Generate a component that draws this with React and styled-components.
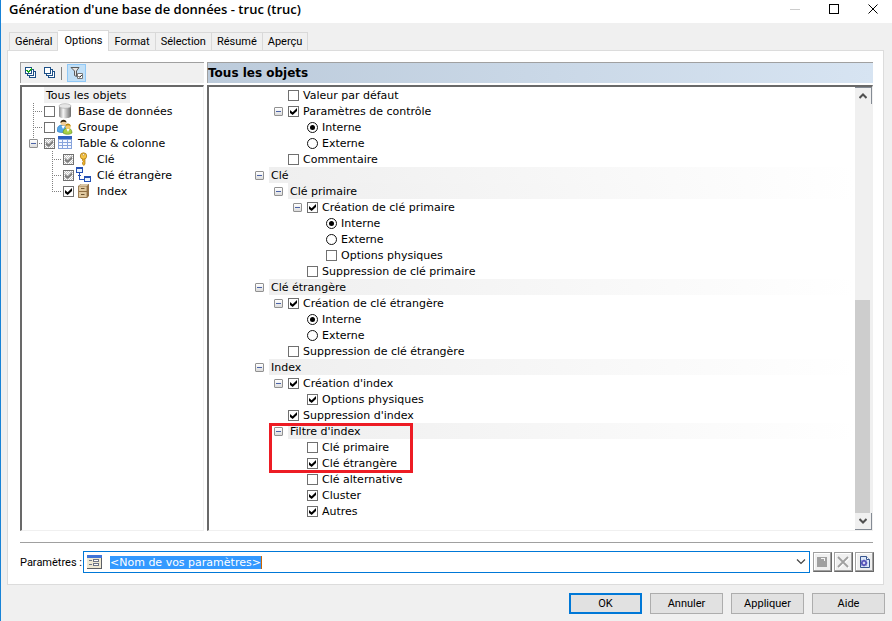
import { useState } from "react";
import styled, { createGlobalStyle, css } from "styled-components";

const GlobalStyle = createGlobalStyle`
  * {
    box-sizing: border-box;
  }
  body {
    margin: 0;
    background: #f0f0f0;
    color: #000;
    font-family: Roboto, "Liberation Sans", Arial, sans-serif;
    font-size: 11px;
  }
  button, input {
    font: inherit;
    color: inherit;
    margin: 0;
    padding: 0;
  }
  svg {
    display: block;
    flex: none;
  }
`;

const treeFont = css`
  font-family: "DejaVu Sans", Verdana, sans-serif;
  font-size: 11px;
  line-height: 18px;
`;

const Window = styled.div`
  display: flex;
  flex-direction: column;
  height: 100vh;
  min-height: 560px;
  border-left: 1px solid #1883d7;
`;

const TitleBar = styled.header`
  display: flex;
  justify-content: space-between;
  height: 23px;
  padding-left: 8px;
  background: #fff;
`;

const Title = styled.h1`
  margin: 0;
  font-family: "Open Sans", "Noto Sans", sans-serif;
  font-size: 13px;
  font-weight: 600;
  line-height: 18px;
`;

const WindowButtons = styled.div`
  display: flex;
  gap: 28px;
  padding: 4px 13px 0 0;
`;

const WindowButton = styled.button`
  width: 11px;
  height: 11px;
  border: 0;
  background: none;
`;

const Tabs = styled.div`
  display: flex;
  align-items: flex-end;
  height: 28px;
  margin-bottom: -1px;
  padding: 0 8px;
  z-index: 1;
`;

const Tab = styled.button`
  height: 18px;
  margin-bottom: 1px;
  padding: 0 5px;
  border: 1px solid #d9d9d9;
  border-width: 1px 1px 0 0;
  background: #f0f0f0;
  line-height: 17px;
  &:first-child {
    border-left-width: 1px;
  }
  ${(p) =>
    p.$active &&
    css`
      height: 21px;
      margin-bottom: 0;
      padding: 0 6px 2px;
      background: #fff;
    `}
`;

const Page = styled.main`
  flex: 1;
  min-height: 0;
  display: flex;
  flex-direction: column;
  margin: 0 8px 0 6px;
  padding: 11px 9px 11px 12px;
  border: 1px solid #dcdcdc;
  background: #fff;
`;

const Panes = styled.div`
  flex: 1;
  min-height: 0;
  display: grid;
  grid-template-columns: 184px 1fr;
  grid-template-rows: 21px 1fr;
  gap: 2px 3px;
  margin-right: 1px;
`;

const Toolbar = styled.div`
  display: flex;
  align-items: center;
  border: 1px solid #a0a0a0;
  border-width: 1px 0 0 1px;
  background: #f0f0f0;
`;

const ToolButton = styled.button`
  display: grid;
  place-items: center;
  width: 19px;
  height: 18px;
  border: 1px solid ${(p) => (p.$on ? "#90c8f6" : "transparent")};
  background: ${(p) => (p.$on ? "#c2e0f7" : "none")};
`;

const ToolSeparator = styled.span`
  width: 1px;
  height: 13px;
  margin: 0 5px 0 2px;
  background: #808080;
`;

const PaneTitle = styled.h2`
  margin: 0;
  border: 1px solid #a0a0a0;
  border-width: 1px 0 0 1px;
  background: linear-gradient(90deg, #bccbdb, #d7e4f2);
  ${treeFont}
  font-size: 12px;
  font-weight: 700;
  line-height: 20px;
`;

const Pane = styled.div`
  display: flex;
  min-width: 0;
  min-height: 0;
  overflow: hidden;
  border: 2px solid #696969;
  border-color: #696969 #f0f0f0 #f0f0f0 #696969;
  border-right-width: 1px;
  border-bottom-width: 1px;
  ${treeFont}
`;

const Tree = styled.div`
  flex: 1;
  min-width: 0;
`;

const Row = styled.div`
  display: flex;
  height: 16px;
  padding-left: ${(p) => p.$start + p.$level * 19}px;
  white-space: nowrap;
`;

const dots = "#808080 0 1px, transparent 1px 2px";

const Slot = styled.span`
  flex: none;
  width: ${(p) => (p.$lines ? 15 : 14)}px;
  padding-top: 4px;
  ${(p) =>
    p.$lines &&
    css`
      background:
        repeating-linear-gradient(${dots}) 4px 0 / 1px
          ${p.$lines === "last" ? "8px" : "16px"} no-repeat,
        repeating-linear-gradient(90deg, ${dots}) 4px 8px / 10px 1px no-repeat;
    `}
`;

const Expander = styled.button`
  display: block;
  width: 9px;
  height: 9px;
  border: 1px solid #919191;
  border-radius: 1px;
  background:
    linear-gradient(#4b63a7, #4b63a7) center / 5px 1px no-repeat,
    linear-gradient(#fff, #dcdcdc);
`;

const Item = styled.label`
  display: flex;
`;

const Check = styled.input`
  appearance: none;
  flex: none;
  width: 11px;
  height: 11px;
  margin-top: 3px;
  border: 1px solid #707070;
  background: ${(p) =>
    p.$partial
      ? "repeating-conic-gradient(#c4c4c4 0 25%, #fff 0 50%) 0 0 / 2px 2px"
      : "#fff"};
  &:checked::before {
    content: "";
    display: block;
    width: 7px;
    height: 7px;
    margin: 1px;
    background: ${(p) => (p.$partial ? "#808080" : "#000")};
    clip-path: polygon(0 28%, 38% 62%, 100% 0, 100% 43%, 38% 100%, 0 71%);
  }
`;

const Radio = styled.input`
  appearance: none;
  flex: none;
  width: 11px;
  height: 11px;
  margin-top: 3px;
  border: 1px solid #111;
  border-radius: 50%;
  background: #fff;
  &:checked::before {
    content: "";
    display: block;
    width: 5px;
    height: 5px;
    margin: 2px;
    border-radius: 50%;
    background: #000;
  }
`;

const ItemText = styled.span`
  padding-left: 4px;
`;

const Section = styled.span`
  flex: 1;
  padding-left: 2px;
  background: linear-gradient(90deg, #efefef, #fff);
`;

const Root = styled.span`
  padding: 0 4px 0 2px;
  background: #f0f0f0;
`;

const TreeIcon = styled.span`
  width: 16px;
  margin: 0 1px 0 2px;
`;

const Marked = styled.div`
  position: relative;
`;

const Frame = styled.div`
  position: absolute;
  top: 0;
  left: 60px;
  width: 144px;
  height: 50px;
  border: 3px solid #ed1c24;
  pointer-events: none;
`;

const ScrollBar = styled.div`
  display: flex;
  flex-direction: column;
  width: 17px;
  background: #f0f0f0;
`;

const ScrollButton = styled.button`
  display: grid;
  place-items: center;
  height: 17px;
  border: 1px solid #848b94;
  border-width: ${(p) => (p.$down ? "0 1px 1px 0" : "1px 1px 0 0")};
  background: #f0f0f0;
`;

const Track = styled.div`
  flex: 1;
  display: flex;
  align-items: flex-end;
`;

const Thumb = styled.div`
  width: 15px;
  height: 52%;
  background: #cdcdcd;
`;

const Divider = styled.hr`
  align-self: stretch;
  margin: 11px 1px 8px 0;
  border: 0;
  border-top: 1px solid #a0a0a0;
`;

const Params = styled.div`
  display: flex;
  align-items: center;
`;

const ParamsLabel = styled.label`
  width: 63px;
  white-space: nowrap;
`;

const Combo = styled.div`
  flex: 1;
  display: flex;
  align-items: center;
  height: 22px;
  margin-right: 3px;
  padding: 0 3px;
  border: 1px solid #0078d7;
`;

const ComboInput = styled.input`
  field-sizing: content;
  height: 13px;
  margin: 1px auto 0 7px;
  border: 0;
  border-right: 1px solid #cc6600;
  outline: 0;
  background: #3399ff;
  color: #fff;
  ${treeFont}
  line-height: 13px;
`;

const ComboArrow = styled.button`
  border: 0;
  background: none;
`;

const IconButtons = styled.div`
  display: flex;
  gap: 2px;
`;

const IconButton = styled.button`
  display: grid;
  place-items: center;
  width: 19px;
  height: 20px;
  border: 1px solid #a0a0a0;
  border-color: #a0a0a0 #696969 #696969 #a0a0a0;
  background: #f0f0f0;
  box-shadow: inset -1px -1px #a0a0a0, inset 1px 1px #fff;
`;

const Footer = styled.footer`
  display: flex;
  justify-content: flex-end;
  gap: 8px;
  padding: 8px 7px 7px;
`;

const DialogButton = styled.button`
  width: 73px;
  height: 21px;
  border: ${(p) => (p.$primary ? "2px solid #0078d7" : "1px solid #adadad")};
  background: #e1e1e1;
`;

const icons = {
  database: (
    <svg width="16" height="16" viewBox="0 0 16 16">
      <defs>
        <linearGradient id="metal">
          <stop offset="0" stopColor="#8c8c8c" />
          <stop offset=".35" stopColor="#f6f6f6" />
          <stop offset="1" stopColor="#6c6c6c" />
        </linearGradient>
      </defs>
      <path d="M2 3v10c0 3 12 3 12 0V3z" fill="url(#metal)" />
      <ellipse cx="8" cy="3" rx="6" ry="2.3" fill="#e6e6e6" stroke="#a5a5a5" strokeWidth=".6" />
    </svg>
  ),
  group: (
    <svg width="16" height="16" viewBox="0 0 16 16">
      <path d="M0 12c0-4 2-6 5-6s5 2 5 6c-2 2-8 2-10 0z" fill="#55a7e8" stroke="#2b76b8" strokeWidth=".6" />
      <circle cx="6.5" cy="4" r="2.8" fill="#f3cf9a" />
      <path d="M3.500 4C3 0 9.500-.5 9.500 3.500 8 2.500 5.500 2 3.500 4z" fill="#33250f" />
      <path d="M4.500 7l1.500 3 2-3z" fill="#fff" />
      <path d="M6 14c0-3.500 2-5 4.500-5s4.500 1.500 4.500 5c-2 1.800-7 1.800-9 0z" fill="#a8cf45" stroke="#5f8a1c" strokeWidth=".6" />
      <circle cx="11" cy="7.500" r="2.600" fill="#f5c96c" />
      <path d="M8.300 7.500c-.3-4 5.500-4 5.400 0-1.600-1.400-3.400-1.600-5.400 0z" fill="#b8860b" />
      <path d="M9.500 10l1.500 3 1.500-3z" fill="#fff" />
    </svg>
  ),
  table: (
    <svg width="16" height="16" viewBox="0 0 16 16" shapeRendering="crispEdges">
      <path d="M1 1h14v13H1z" fill="#86a3dc" />
      <path d="M1 1h14v3H1z" fill="#2e5fc0" />
      <path d="M2 5h3v2H2zm4 0h4v2H6zm5 0h3v2h-3zM2 8h3v2H2zm4 0h4v2H6zm5 0h3v2h-3zM2 11h3v2H2zm4 0h4v2H6zm5 0h3v2h-3z" fill="#f4f8ff" />
    </svg>
  ),
  key: (
    <svg width="16" height="16" viewBox="0 0 16 16">
      <path d="M6.500 7h2.500v6l-1.200 1.500L6.500 13v-1.500l.8-1-.8-1z" fill="#f0b429" stroke="#a87412" strokeWidth=".7" />
      <circle cx="7.500" cy="5" r="3.200" fill="#f7c544" stroke="#b07c14" strokeWidth=".8" />
      <circle cx="7.500" cy="3.700" r="1" fill="#fff" stroke="#a87412" strokeWidth=".5" />
    </svg>
  ),
  reference: (
    <svg width="16" height="16" viewBox="0 0 16 16" shapeRendering="crispEdges">
      <path d="M.5.5h6v5h-6zM8.500 9.500h6v5h-6z" fill="#e9f4ff" stroke="#2450b4" />
      <path d="M0 0h7v2H0zM8 9h7v2H8z" fill="#2450b4" />
      <path d="M3.500 6v6.500H8M2 8.500h3" fill="none" stroke="#2450b4" />
    </svg>
  ),
  index: (
    <svg width="16" height="16" viewBox="0 0 16 16">
      <path d="M2.500 3l2-2h8.500v12l-2 2H2.500z" fill="#94734a" />
      <path d="M2.500 3h8.500v11.500H2.500z" fill="#e0c9a0" stroke="#8f6e42" strokeWidth=".8" />
      <path d="M3 2.800L5 1.200h7.500L11 2.800z" fill="#f1e2c4" />
      <path d="M3 8.500h8" stroke="#8f6e42" />
      <path d="M5 5.500h3.500M5 11.500h3.500" stroke="#6c5330" />
    </svg>
  ),
};

const StackIcon = ({ checked }) => (
  <svg width="12" height="12" viewBox="0 0 12 12" shapeRendering="crispEdges">
    <path d="M4.500 4.500h6v6h-6z" fill="#fff" stroke="#1c4f86" />
    <path d="M2.500 2.500h6v6h-6z" fill="#fff" stroke="#1c4f86" />
    <path d="M.5.5h6v6h-6z" fill="#fff" stroke="#1c4f86" />
    {checked && <path d="M1.500 3l2 2L7 1.500" fill="none" stroke="#17a81a" strokeWidth="1.600" />}
  </svg>
);

const FilterIcon = () => (
  <svg width="14" height="14" viewBox="0 0 14 14">
    <path d="M1 1.500h8L6.500 5v5.500l-2-1V5z" fill="#e4e4e4" stroke="#5a5a5a" />
    <path d="M7.500 7.500h5v5h-5z" fill="#fff" stroke="#777" />
    <path d="M8.500 10l1.200 1.300L11.800 9" fill="none" stroke="#222" />
  </svg>
);

const objects = [
  { label: "Base de données", icon: "database", level: 0, lines: "full" },
  { label: "Groupe", icon: "group", level: 0, lines: "full" },
  { label: "Table & colonne", icon: "table", level: 0, lines: "last", open: true, checked: true, partial: true },
  { label: "Clé", icon: "key", level: 1, lines: "full", checked: true, partial: true },
  { label: "Clé étrangère", icon: "reference", level: 1, lines: "full", checked: true, partial: true },
  { label: "Index", icon: "index", level: 1, lines: "last", checked: true },
];

const options = [
  { label: "Valeur par défaut", level: 1 },
  { label: "Paramètres de contrôle", level: 1, open: true, checked: true },
  { label: "Interne", level: 2, radio: "controle", checked: true },
  { label: "Externe", level: 2, radio: "controle" },
  { label: "Commentaire", level: 1 },
  { label: "Clé", level: 0, section: true },
  { label: "Clé primaire", level: 1, section: true },
  { label: "Création de clé primaire", level: 2, open: true, checked: true },
  { label: "Interne", level: 3, radio: "primaire", checked: true },
  { label: "Externe", level: 3, radio: "primaire" },
  { label: "Options physiques", level: 3 },
  { label: "Suppression de clé primaire", level: 2 },
  { label: "Clé étrangère", level: 0, section: true },
  { label: "Création de clé étrangère", level: 1, open: true, checked: true },
  { label: "Interne", level: 2, radio: "etrangere", checked: true },
  { label: "Externe", level: 2, radio: "etrangere" },
  { label: "Suppression de clé étrangère", level: 1 },
  { label: "Index", level: 0, section: true },
  { label: "Création d'index", level: 1, open: true, checked: true },
  { label: "Options physiques", level: 2, checked: true },
  { label: "Suppression d'index", level: 1, checked: true },
];

const indexFilter = [
  { label: "Filtre d'index", level: 1, section: true },
  { label: "Clé primaire", level: 2 },
  { label: "Clé étrangère", level: 2, checked: true },
  { label: "Clé alternative", level: 2 },
  { label: "Cluster", level: 2, checked: true },
  { label: "Autres", level: 2, checked: true },
];

const OptionRow = ({ label, level, section, open, radio, checked }) => (
  <Row $start={46} $level={level}>
    <Slot>
      {(section || open) && <Expander aria-label={`Réduire ${label}`} />}
    </Slot>
    {section ? (
      <Section>{label}</Section>
    ) : (
      <Item>
        {radio ? (
          <Radio type="radio" name={radio} defaultChecked={checked} />
        ) : (
          <Check type="checkbox" defaultChecked={checked} />
        )}
        <ItemText>{label}</ItemText>
      </Item>
    )}
  </Row>
);

const tabs = ["Général", "Options", "Format", "Sélection", "Résumé", "Aperçu"];

export default function App() {
  const [tab, setTab] = useState("Options");
  const [params, setParams] = useState("<Nom de vos paramètres>");

  return (
    <>
      <GlobalStyle />
      <Window>
        <TitleBar>
          <Title>Génération d'une base de données - truc (truc)</Title>
          <WindowButtons>
            <WindowButton aria-label="Réduire">
              <svg width="11" height="11" shapeRendering="crispEdges">
                <path d="M0 5.500h10" stroke="#ccc" />
              </svg>
            </WindowButton>
            <WindowButton aria-label="Agrandir">
              <svg width="11" height="11" shapeRendering="crispEdges">
                <path d="M.5.5h9v9h-9z" fill="none" stroke="#000" />
              </svg>
            </WindowButton>
            <WindowButton aria-label="Fermer">
              <svg width="11" height="11">
                <path d="M.5.5l9 9M9.500.5l-9 9" stroke="#000" />
              </svg>
            </WindowButton>
          </WindowButtons>
        </TitleBar>

        <Tabs role="tablist">
          {tabs.map((name) => (
            <Tab
              key={name}
              role="tab"
              aria-selected={name === tab}
              $active={name === tab}
              onClick={() => setTab(name)}
            >
              {name}
            </Tab>
          ))}
        </Tabs>

        <Page>
          <Panes>
            <Toolbar>
              <ToolButton aria-label="Tout sélectionner">
                <StackIcon checked />
              </ToolButton>
              <ToolButton aria-label="Tout désélectionner">
                <StackIcon />
              </ToolButton>
              <ToolSeparator />
              <ToolButton aria-label="Filtrer" $on>
                <FilterIcon />
              </ToolButton>
            </Toolbar>
            <PaneTitle>Tous les objets</PaneTitle>

            <Pane>
              <Tree>
                <Row $start={22} $level={0}>
                  <Root>Tous les objets</Root>
                </Row>
                {objects.map((o) => (
                  <Row key={o.label} $start={7} $level={o.level}>
                    <Slot $lines={o.lines}>
                      {o.open && <Expander aria-label={`Réduire ${o.label}`} />}
                    </Slot>
                    <Item>
                      <Check
                        type="checkbox"
                        defaultChecked={o.checked}
                        $partial={o.partial}
                      />
                      <TreeIcon>{icons[o.icon]}</TreeIcon>
                      <ItemText>{o.label}</ItemText>
                    </Item>
                  </Row>
                ))}
              </Tree>
            </Pane>

            <Pane>
              <Tree>
                {options.map((o, i) => (
                  <OptionRow key={i} {...o} />
                ))}
                <Marked>
                  {indexFilter.map((o) => (
                    <OptionRow key={o.label} {...o} />
                  ))}
                  <Frame />
                </Marked>
              </Tree>
              <ScrollBar>
                <ScrollButton aria-label="Défiler vers le haut">
                  <svg width="8" height="6">
                    <path d="M.5 5L4 1.500 7.500 5" fill="none" stroke="#505050" strokeWidth="2" />
                  </svg>
                </ScrollButton>
                <Track>
                  <Thumb />
                </Track>
                <ScrollButton aria-label="Défiler vers le bas" $down>
                  <svg width="8" height="6">
                    <path d="M.5 1L4 4.500 7.500 1" fill="none" stroke="#505050" strokeWidth="2" />
                  </svg>
                </ScrollButton>
              </ScrollBar>
            </Pane>
          </Panes>

          <Divider />

          <Params>
            <ParamsLabel htmlFor="params">Paramètres :</ParamsLabel>
            <Combo>
              <svg width="16" height="14" viewBox="0 0 16 14" shapeRendering="crispEdges">
                <path d="M0 0h15v14H0z" fill="#5c5f66" />
                <path d="M0 0h14v13H0z" fill="#efe9d3" />
                <path d="M0 0h15v3H0z" fill="#3f74d8" />
                <path d="M2 5.500h3M2 9.500h3" stroke="#6f7686" />
                <path d="M6.500 4.500h5v2h-5zM6.500 8.500h5v2h-5z" fill="#fff" stroke="#6f7686" />
              </svg>
              <ComboInput
                id="params"
                value={params}
                onChange={(e) => setParams(e.target.value)}
              />
              <ComboArrow aria-label="Ouvrir la liste">
                <svg width="10" height="6">
                  <path d="M1 .5l4 4 4-4" fill="none" stroke="#444" strokeWidth="1.200" />
                </svg>
              </ComboArrow>
            </Combo>
            <IconButtons>
              <IconButton aria-label="Enregistrer">
                <svg width="11" height="12" shapeRendering="crispEdges">
                  <path d="M0 1h10v10H0z" fill="#a0a0a0" />
                  <path d="M4 2h4v1H4zM7 3h1v2H7z" fill="#f4f4f4" />
                </svg>
              </IconButton>
              <IconButton aria-label="Supprimer">
                <svg width="13" height="13">
                  <path d="M2 2l10 10M12 2L2 12" stroke="#fff" strokeWidth="1.500" />
                  <path d="M1 1l10 10M11 1L1 11" stroke="#a0a0a0" strokeWidth="1.800" />
                </svg>
              </IconButton>
              <IconButton aria-label="Gérer les paramètres">
                <svg width="12" height="13" viewBox="0 0 12 13">
                  <path d="M1.500.5h6l3 3v8h-9z" fill="#dbe6f8" stroke="#39568f" />
                  <path d="M7.500.5v3h3" fill="#fff" stroke="#39568f" />
                  <circle cx="5" cy="7" r="2.200" fill="none" stroke="#5350b8" strokeWidth="1.600" />
                  <path d="M5 3.500v7M1.500 7h7M2.500 4.500l5 5M7.500 4.500l-5 5" stroke="#5350b8" strokeWidth=".8" />
                  <circle cx="5" cy="7" r="1" fill="#fff" />
                </svg>
              </IconButton>
            </IconButtons>
          </Params>
        </Page>

        <Footer>
          <DialogButton $primary>OK</DialogButton>
          <DialogButton>Annuler</DialogButton>
          <DialogButton>Appliquer</DialogButton>
          <DialogButton>Aide</DialogButton>
        </Footer>
      </Window>
    </>
  );
}
